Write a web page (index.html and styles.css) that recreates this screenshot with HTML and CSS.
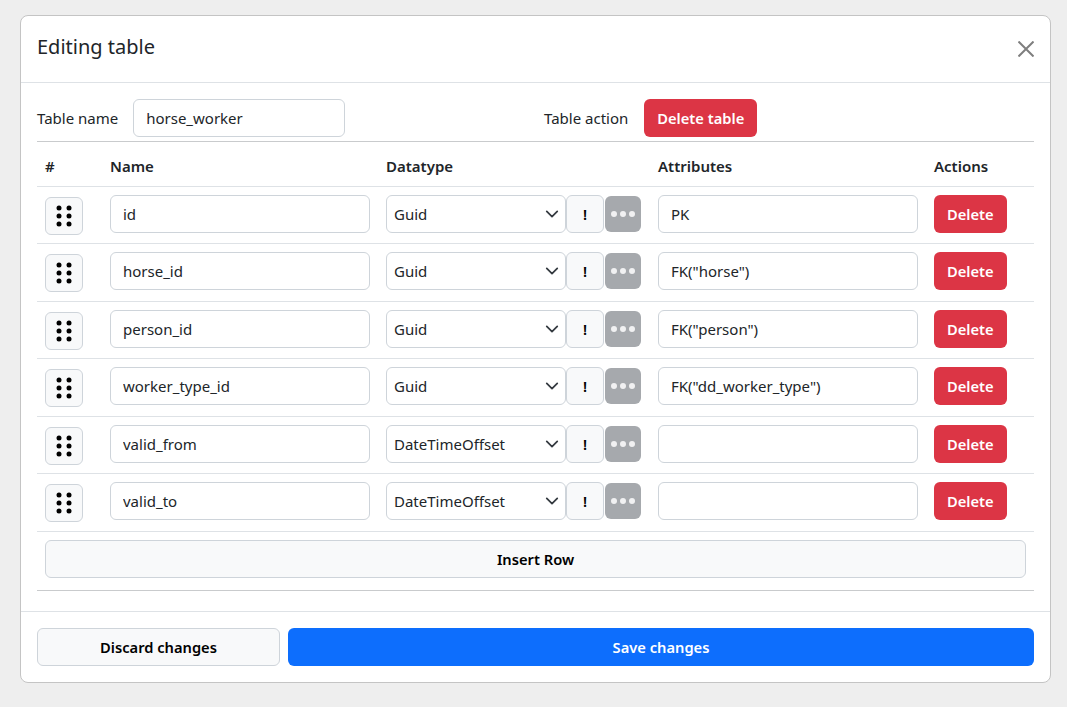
FILE: index.html
```html
<!DOCTYPE html>
<html>
	<head>
		<meta charset="utf-8" />
		<title>Editing table</title>
		<link rel="stylesheet" href="styles.css">
	</head>
	<body>
		<div class="modal">
			<div class="modal-header">
				<h5>Editing table</h5>
				<button class="close" aria-label="Close">
					<svg width="16" height="16" viewBox="0 0 16 16"><path d="M.5.5l15 15M15.5.5l-15 15" stroke="#000" stroke-width="2" fill="none"/></svg>
				</button>
			</div>
			<div class="modal-body">
				<div class="table-form">
					<div class="name-group">
						<label>Table name</label>
						<input class="field table-name" type="text" value="horse_worker">
					</div>
					<div class="action-group">
						<label>Table action</label>
						<button class="btn danger">Delete table</button>
					</div>
				</div>
				<table>
					<colgroup>
						<col class="c-num"><col class="c-name"><col class="c-type"><col class="c-attr"><col class="c-act">
					</colgroup>
					<thead>
						<tr><th>#</th><th>Name</th><th>Datatype</th><th>Attributes</th><th>Actions</th></tr>
					</thead>
					<tbody>
						<tr>
							<td><button class="btn light handle"><svg width="16" height="22" viewBox="0 0 16 22"><g><circle cx="3" cy="3" r="2.5"/><circle cx="13" cy="3" r="2.5"/><circle cx="3" cy="11" r="2.5"/><circle cx="13" cy="11" r="2.5"/><circle cx="3" cy="19" r="2.5"/><circle cx="13" cy="19" r="2.5"/></g></svg></button></td>
							<td><input class="field" type="text" value="id"></td>
							<td><div class="type-cell"><select class="field"><option>Guid</option></select><button class="btn light flag">!</button><button class="btn more"><i></i><i></i><i></i></button></div></td>
							<td><input class="field" type="text" value="PK"></td>
							<td><button class="btn danger">Delete</button></td>
						</tr>
						<tr>
							<td><button class="btn light handle"><svg width="16" height="22" viewBox="0 0 16 22"><g><circle cx="3" cy="3" r="2.5"/><circle cx="13" cy="3" r="2.5"/><circle cx="3" cy="11" r="2.5"/><circle cx="13" cy="11" r="2.5"/><circle cx="3" cy="19" r="2.5"/><circle cx="13" cy="19" r="2.5"/></g></svg></button></td>
							<td><input class="field" type="text" value="horse_id"></td>
							<td><div class="type-cell"><select class="field"><option>Guid</option></select><button class="btn light flag">!</button><button class="btn more"><i></i><i></i><i></i></button></div></td>
							<td><input class="field" type="text" value='FK("horse")'></td>
							<td><button class="btn danger">Delete</button></td>
						</tr>
						<tr>
							<td><button class="btn light handle"><svg width="16" height="22" viewBox="0 0 16 22"><g><circle cx="3" cy="3" r="2.5"/><circle cx="13" cy="3" r="2.5"/><circle cx="3" cy="11" r="2.5"/><circle cx="13" cy="11" r="2.5"/><circle cx="3" cy="19" r="2.5"/><circle cx="13" cy="19" r="2.5"/></g></svg></button></td>
							<td><input class="field" type="text" value="person_id"></td>
							<td><div class="type-cell"><select class="field"><option>Guid</option></select><button class="btn light flag">!</button><button class="btn more"><i></i><i></i><i></i></button></div></td>
							<td><input class="field" type="text" value='FK("person")'></td>
							<td><button class="btn danger">Delete</button></td>
						</tr>
						<tr>
							<td><button class="btn light handle"><svg width="16" height="22" viewBox="0 0 16 22"><g><circle cx="3" cy="3" r="2.5"/><circle cx="13" cy="3" r="2.5"/><circle cx="3" cy="11" r="2.5"/><circle cx="13" cy="11" r="2.5"/><circle cx="3" cy="19" r="2.5"/><circle cx="13" cy="19" r="2.5"/></g></svg></button></td>
							<td><input class="field" type="text" value="worker_type_id"></td>
							<td><div class="type-cell"><select class="field"><option>Guid</option></select><button class="btn light flag">!</button><button class="btn more"><i></i><i></i><i></i></button></div></td>
							<td><input class="field" type="text" value='FK("dd_worker_type")'></td>
							<td><button class="btn danger">Delete</button></td>
						</tr>
						<tr>
							<td><button class="btn light handle"><svg width="16" height="22" viewBox="0 0 16 22"><g><circle cx="3" cy="3" r="2.5"/><circle cx="13" cy="3" r="2.5"/><circle cx="3" cy="11" r="2.5"/><circle cx="13" cy="11" r="2.5"/><circle cx="3" cy="19" r="2.5"/><circle cx="13" cy="19" r="2.5"/></g></svg></button></td>
							<td><input class="field" type="text" value="valid_from"></td>
							<td><div class="type-cell"><select class="field"><option>DateTimeOffset</option></select><button class="btn light flag">!</button><button class="btn more"><i></i><i></i><i></i></button></div></td>
							<td><input class="field" type="text" value=""></td>
							<td><button class="btn danger">Delete</button></td>
						</tr>
						<tr>
							<td><button class="btn light handle"><svg width="16" height="22" viewBox="0 0 16 22"><g><circle cx="3" cy="3" r="2.5"/><circle cx="13" cy="3" r="2.5"/><circle cx="3" cy="11" r="2.5"/><circle cx="13" cy="11" r="2.5"/><circle cx="3" cy="19" r="2.5"/><circle cx="13" cy="19" r="2.5"/></g></svg></button></td>
							<td><input class="field" type="text" value="valid_to"></td>
							<td><div class="type-cell"><select class="field"><option>DateTimeOffset</option></select><button class="btn light flag">!</button><button class="btn more"><i></i><i></i><i></i></button></div></td>
							<td><input class="field" type="text" value=""></td>
							<td><button class="btn danger">Delete</button></td>
						</tr>
						<tr class="insert-row">
							<td colspan="5"><button class="btn light wide">Insert Row</button></td>
						</tr>
					</tbody>
				</table>
			</div>
			<div class="modal-footer">
				<button class="btn light discard">Discard changes</button>
				<button class="btn primary save">Save changes</button>
			</div>
		</div>
	</body>
</html>
```

FILE: styles.css
```css
* {
	padding: 0px;
	margin: 0px;
	box-sizing: border-box;
}

body {
	background-color: #eee;
	padding: 15px 16px 0 20px;
	font-family: "Noto Sans", "Open Sans", sans-serif;
	font-size: 15px;
	color: #212529;
}

.modal {
	width: 1031px;
	height: 668px;
	background-color: #fff;
	border: 1px solid #c4c4c4;
	border-radius: 8px;
	display: flex;
	flex-direction: column;
}

.modal-header {
	height: 67px;
	flex: none;
	padding: 0 16px;
	display: flex;
	justify-content: space-between;
	align-items: center;
	border-bottom: 1px solid #dee2e6;
}

.modal-header h5 {
	font-size: 20px;
	font-weight: 400;
	margin-bottom: 6px;
}

.close {
	border: 0;
	background: none;
	opacity: .5;
	display: flex;
	margin-bottom: 1px;
}

.modal-body {
	flex: 1;
	padding: 16px 16px 0;
}

.table-form {
	display: flex;
	height: 43px;
	border-bottom: 1px solid #c9cbcd;
}

.table-form label {
	margin-right: 16px;
	white-space: nowrap;
}

.name-group label {
	margin-right: 15px;
}

.name-group, .action-group {
	display: flex;
	align-items: center;
	height: 38px;
}

.name-group {
	width: 507px;
}

.field {
	width: 100%;
	height: 38px;
	padding: 0 12px;
	border: 1px solid #ced4da;
	border-radius: 6px;
	background-color: #fff;
	font-family: inherit;
	font-size: 15px;
	color: #212529;
}

.field.table-name {
	width: 212px;
	flex: none;
}

select.field {
	flex: none;
	width: 180px;
	padding: 0 7px;
	appearance: none;
	background-image: url("data:image/svg+xml,%3csvg xmlns='http://www.w3.org/2000/svg' viewBox='0 0 16 16'%3e%3cpath fill='none' stroke='%23343a40' stroke-linecap='round' stroke-linejoin='round' stroke-width='2' d='M2 5l6 6 6-6'/%3e%3c/svg%3e");
	background-repeat: no-repeat;
	background-position: right 6px center;
	background-size: 14px 14px;
}

table {
	width: 997px;
	border-collapse: collapse;
	table-layout: fixed;
	border-bottom: 1px solid #c9cbcd;
}

.c-num { width: 65px; }
.c-name { width: 276px; }
.c-type { width: 272px; }
.c-attr { width: 276px; }
.c-act { width: 108px; }

th {
	height: 44px;
	padding: 4px 8px 0;
	text-align: left;
	font-weight: 600;
	border-bottom: 1px solid #dee2e6;
}

td {
	height: 57.5px;
	padding: 0 8px 2px;
	vertical-align: middle;
	border-bottom: 1px solid #dee2e6;
}

.insert-row td {
	height: 59px;
	padding: 8px 8px 12px;
	border-bottom: 0;
}

.type-cell {
	display: flex;
	align-items: center;
}

.btn {
	height: 38px;
	border: 1px solid transparent;
	border-radius: 6px;
	font-family: inherit;
	font-size: 14.7px;
	font-weight: 600;
	white-space: nowrap;
}

.danger {
	background-color: #dc3545;
	color: #fff;
	padding: 0 12px;
}

.primary {
	background-color: #0d6efd;
	color: #fff;
}

.light {
	background-color: #f8f9fa;
	border-color: #ced4da;
	color: #000;
}

.handle {
	width: 38px;
	margin-top: 4px;
	display: flex;
	align-items: center;
	justify-content: center;
}

.flag {
	width: 38px;
	flex: none;
}

.more {
	width: 36px;
	height: 36px;
	margin-left: 1px;
	flex: none;
	background-color: #a6a9ad;
	display: flex;
	align-items: center;
	justify-content: center;
	gap: 3px;
}

.more i {
	width: 6px;
	height: 6px;
	border-radius: 50%;
	background-color: #f1f1f2;
}

.wide {
	width: 100%;
}

.modal-footer {
	height: 71px;
	flex: none;
	padding: 16px 16px 0;
	display: flex;
	gap: 8px;
	border-top: 1px solid #dee2e6;
}

.discard {
	width: 243px;
}

.save {
	flex: 1;
}
```
